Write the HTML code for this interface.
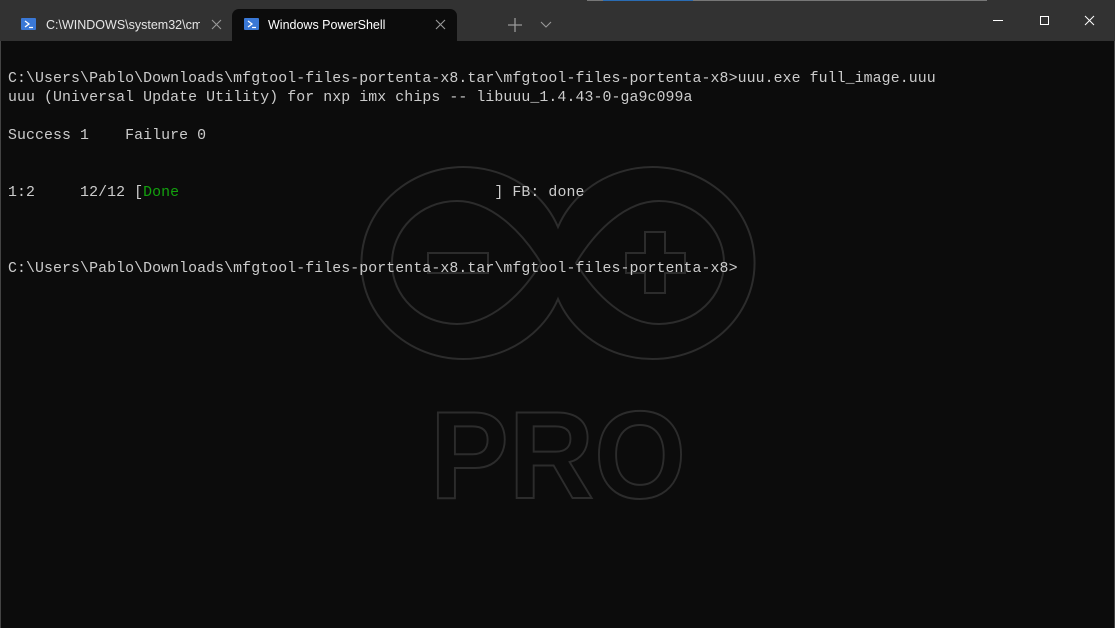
<!DOCTYPE html>
<html><head><meta charset="utf-8"><style>
html,body{margin:0;padding:0;width:1115px;height:628px;overflow:hidden;background:#0c0c0c;}
.bar{position:absolute;left:0;top:0;width:1115px;height:41px;background:#323232;}
.tab{position:absolute;top:9px;height:32px;font:12.5px "Liberation Sans",sans-serif;color:#e6e6e6;}
.t1{left:0;width:232px;}
.t2{left:232px;width:225px;background:#0c0c0c;border-radius:7px 7px 0 0;color:#fff;}
.lbl{position:absolute;top:9px;white-space:nowrap;overflow:hidden;}
.x{position:absolute;top:6px;width:12px;height:12px;}
.term{position:absolute;left:8px;top:70px;font:14.87px/19px "Liberation Mono",monospace;letter-spacing:0.09px;color:#cccccc;white-space:pre;margin:0;}
.g{color:#13a10e;}
</style></head><body>
<svg style="position:absolute;left:0;top:0" width="1115" height="628">
<g fill="none" stroke="#2c2c2c" stroke-width="2">
<path d="M558 227 A102 96 0 1 0 558 299 A102 96 0 1 0 558 227 Z"/>
<path d="M541 263 C521 230 490 201 457 201 C420 201 392 230 392 263 C392 296 420 324 457 324 C490 324 521 296 541 263 Z"/>
<path d="M576 263 C596 230 626 201 659 201 C696 201 724 230 724 263 C724 296 696 324 659 324 C626 324 596 296 576 263 Z"/>
<rect x="428" y="253" width="60" height="20"/>
<path d="M645 232 H665 V253 H685 V273 H665 V293 H645 V273 H626 V253 H645 Z"/>
<text x="430" y="498" font-family="Liberation Sans, sans-serif" font-weight="bold" font-size="124" textLength="256" lengthAdjust="spacingAndGlyphs">PRO</text>
</g>
</svg>
<div class="bar">
<div style="position:absolute;top:0;left:587px;width:400px;height:1px;background:#777"></div>
<div style="position:absolute;top:0;left:603px;width:90px;height:1px;background:#2a6cb3"></div>
<div class="tab t1"><svg style="position:absolute;left:21px;top:9px" width="15" height="12"><rect width="15" height="12" fill="#3a78d6" rx="1"/><path d="M4 3 L8 6 L4 9" stroke="#fff" stroke-width="1.3" fill="none"/><path d="M8 9.5 H12" stroke="#fff" stroke-width="1.2"/></svg><div class="lbl" style="left:46px;width:154px">C:\WINDOWS\system32\cmd.exe</div><svg class="x" style="left:211px;top:10px" width="12" height="12"><path d="M1 1 L10 10 M10 1 L1 10" stroke="#999" stroke-width="1.1"/></svg></div>
<div class="tab t2"><svg style="position:absolute;left:12px;top:9px" width="15" height="12"><rect width="15" height="12" fill="#3a78d6" rx="1"/><path d="M4 3 L8 6 L4 9" stroke="#fff" stroke-width="1.3" fill="none"/><path d="M8 9.5 H12" stroke="#fff" stroke-width="1.2"/></svg><div class="lbl" style="left:36px">Windows PowerShell</div><svg class="x" style="left:203px;top:10px" width="12" height="12"><path d="M1 1 L10 10 M10 1 L1 10" stroke="#999" stroke-width="1.1"/></svg></div>
<svg style="position:absolute;left:505px;top:17px" width="50" height="16"><path d="M3 8 H17 M10 1 V15" stroke="#999" stroke-width="1.3"/><path d="M36 5 L41 10 L46 5" stroke="#999" stroke-width="1.1" fill="none"/></svg>
<svg style="position:absolute;left:990px;top:14px" width="110" height="14"><path d="M3 6.5 H13" stroke="#fff" stroke-width="1"/><rect x="50.5" y="2.5" width="8" height="8" stroke="#fff" fill="none"/><path d="M95 2 L104 11 M104 2 L95 11" stroke="#fff" stroke-width="1"/></svg>
</div>
<div style="position:absolute;left:0;top:41px;width:1px;height:587px;background:#444"></div>
<div style="position:absolute;right:0;top:41px;width:1px;height:587px;background:#444"></div>
<pre class="term">C:\Users\Pablo\Downloads\mfgtool-files-portenta-x8.tar\mfgtool-files-portenta-x8&gt;uuu.exe full_image.uuu
uuu (Universal Update Utility) for nxp imx chips -- libuuu_1.4.43-0-ga9c099a

Success 1    Failure 0


1:2     12/12 [<span class="g">Done</span>                                   ] FB: done



C:\Users\Pablo\Downloads\mfgtool-files-portenta-x8.tar\mfgtool-files-portenta-x8&gt;</pre>
</body></html>
